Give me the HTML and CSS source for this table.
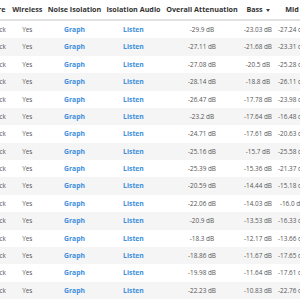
FILE: index.html
```html
<!DOCTYPE html>
<html>
<head>
<meta charset="utf-8">
<link rel="stylesheet" href="styles.css">
</head>
<body>
<div class="viewport">
<table class="grid">
<colgroup>
<col class="c-enc"><col class="c-wl"><col class="c-ni"><col class="c-ia"><col class="c-oa"><col class="c-bass"><col class="c-mid">
</colgroup>
<thead>
<tr><th>Enclosure</th><th>Wireless</th><th>Noise Isolation</th><th>Isolation Audio</th><th>Overall Attenuation</th><th>Bass <svg class="sort" width="4" height="3" viewBox="0 0 4 3"><path d="M0 0H4L2 3Z" fill="#444"/></svg></th><th>Mid</th></tr>
</thead>
<tbody>
<tr><td>Closed-back</td><td>Yes</td><td><a>Graph</a></td><td><a>Listen</a></td><td>-29.9 dB</td><td>-23.03 dB</td><td>-27.24 dB</td></tr>
<tr><td>Closed-back</td><td>Yes</td><td><a>Graph</a></td><td><a>Listen</a></td><td>-27.11 dB</td><td>-21.68 dB</td><td>-23.31 dB</td></tr>
<tr><td>Closed-back</td><td>Yes</td><td><a>Graph</a></td><td><a>Listen</a></td><td>-27.08 dB</td><td>-20.5 dB</td><td>-25.28 dB</td></tr>
<tr><td>Closed-back</td><td>Yes</td><td><a>Graph</a></td><td><a>Listen</a></td><td>-28.14 dB</td><td>-18.8 dB</td><td>-26.11 dB</td></tr>
<tr><td>Closed-back</td><td>Yes</td><td><a>Graph</a></td><td><a>Listen</a></td><td>-26.47 dB</td><td>-17.78 dB</td><td>-23.98 dB</td></tr>
<tr><td>Closed-back</td><td>Yes</td><td><a>Graph</a></td><td><a>Listen</a></td><td>-23.2 dB</td><td>-17.64 dB</td><td>-16.48 dB</td></tr>
<tr><td>Closed-back</td><td>Yes</td><td><a>Graph</a></td><td><a>Listen</a></td><td>-24.71 dB</td><td>-17.61 dB</td><td>-20.63 dB</td></tr>
<tr><td>Closed-back</td><td>Yes</td><td><a>Graph</a></td><td><a>Listen</a></td><td>-25.16 dB</td><td>-15.7 dB</td><td>-25.58 dB</td></tr>
<tr><td>Closed-back</td><td>Yes</td><td><a>Graph</a></td><td><a>Listen</a></td><td>-25.39 dB</td><td>-15.36 dB</td><td>-21.37 dB</td></tr>
<tr><td>Closed-back</td><td>Yes</td><td><a>Graph</a></td><td><a>Listen</a></td><td>-20.59 dB</td><td>-14.44 dB</td><td>-15.18 dB</td></tr>
<tr><td>Closed-back</td><td>Yes</td><td><a>Graph</a></td><td><a>Listen</a></td><td>-22.06 dB</td><td>-14.03 dB</td><td>-16.0 dB</td></tr>
<tr><td>Closed-back</td><td>Yes</td><td><a>Graph</a></td><td><a>Listen</a></td><td>-20.9 dB</td><td>-13.53 dB</td><td>-16.33 dB</td></tr>
<tr><td>Closed-back</td><td>Yes</td><td><a>Graph</a></td><td><a>Listen</a></td><td>-18.3 dB</td><td>-12.17 dB</td><td>-13.66 dB</td></tr>
<tr><td>Closed-back</td><td>Yes</td><td><a>Graph</a></td><td><a>Listen</a></td><td>-18.86 dB</td><td>-11.67 dB</td><td>-17.65 dB</td></tr>
<tr><td>Closed-back</td><td>Yes</td><td><a>Graph</a></td><td><a>Listen</a></td><td>-19.98 dB</td><td>-11.64 dB</td><td>-17.61 dB</td></tr>
<tr><td>Closed-back</td><td>Yes</td><td><a>Graph</a></td><td><a>Listen</a></td><td>-22.23 dB</td><td>-10.83 dB</td><td>-22.76 dB</td></tr>
<tr><td>Closed-back</td><td>Yes</td><td><a>Graph</a></td><td><a>Listen</a></td><td>-21.5 dB</td><td>-10.2 dB</td><td>-20.1 dB</td></tr>
</tbody>
</table>
</div>
</body>
</html>
```
FILE: styles.css
```css
html, body {
  margin: 0;
  padding: 0;
  background: #fff;
}
.viewport {
  width: 300px;
  height: 300px;
  overflow: hidden;
}
.grid {
  table-layout: fixed;
  border-collapse: collapse;
  width: 342.6px;
  margin-left: -33.5px;
  font-family: "Open Sans", "DejaVu Sans", sans-serif;
  color: #555;
}
.c-enc { width: 43px; }
.c-wl { width: 35.6px; }
.c-ni { width: 58.8px; }
.c-ia { width: 59.2px; }
.c-oa { width: 77.8px; }
.c-bass { width: 34.2px; }
.c-mid { width: 34px; }
.grid th {
  font-size: 7.2px;
  font-weight: 700;
  color: #333;
  line-height: 11px;
  padding: 4px 0 4px;
  text-align: center;
  white-space: nowrap;
  border-bottom: 2px solid #e2e2e2;
}
.grid td {
  font-size: 6.4px;
  line-height: 9.37px;
  padding: 4px 0;
  text-align: center;
  white-space: nowrap;
  overflow: hidden;
}
.grid tbody tr:nth-child(even) td {
  background: #f5f5f5;
}
.grid a {
  color: #3d8fdc;
  font-weight: 700;
  font-size: 6.8px;
}
.sort {
  vertical-align: middle;
  margin-left: 1px;
}
```
